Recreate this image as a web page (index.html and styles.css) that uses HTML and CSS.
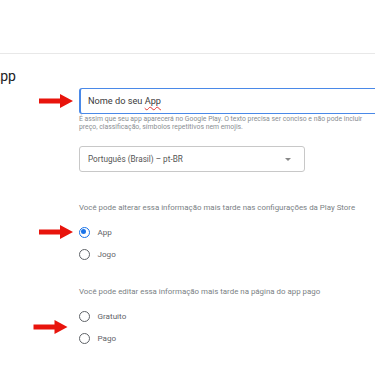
FILE: index.html
```html
<!DOCTYPE html>
<html lang="pt-BR">
<head>
    <meta charset="UTF-8">
    <meta name="viewport" content="width=device-width, initial-scale=1.0">
    <title>Criar app</title>
    <link rel="stylesheet" href="styles.css">
</head>
<body>
    <div class="topbar"></div>

    <div class="form">
        <h2 class="title">App</h2>

        <!-- nome do app -->
        <div class="mark">
            <svg class="arrow" viewBox="0 0 34 16" width="34" height="16"><path d="M0 5.5h21V1l13 7-13 7v-4.5H0z" fill="#e8140c"/></svg>
        </div>
        <div class="field">
            <div class="text-input">Nome do seu <span class="typo">App</span></div>
        </div>
        <div></div>
        <p class="hint">É assim que seu app aparecerá no Google Play. O texto precisa ser conciso e não pode incluir<br>preço, classificação, símbolos repetitivos nem emojis.</p>

        <div></div>
        <div class="select">
            <span>Português (Brasil) – pt-BR</span>
            <span class="caret"></span>
        </div>

        <!-- app ou jogo -->
        <div></div>
        <p class="question first">Você pode alterar essa informação mais tarde nas configurações da Play Store</p>
        <div class="mark">
            <svg class="arrow" viewBox="0 0 34 16" width="34" height="16"><path d="M0 5.5h21V1l13 7-13 7v-4.5H0z" fill="#e8140c"/></svg>
        </div>
        <label class="radio"><span class="dot checked"></span>App</label>
        <div></div>
        <label class="radio"><span class="dot"></span>Jogo</label>

        <!-- gratuito ou pago -->
        <div></div>
        <p class="question">Você pode editar essa informação mais tarde na página do app pago</p>
        <div class="mark span2">
            <svg class="arrow" viewBox="0 0 34 16" width="35" height="16"><path d="M0 5.5h21V1l13 7-13 7v-4.5H0z" fill="#e8140c"/></svg>
        </div>
        <label class="radio"><span class="dot"></span>Gratuito</label>
        <label class="radio"><span class="dot"></span>Pago</label>
    </div>
</body>
</html>
```

FILE: styles.css
```css
body {
    margin: 0;
    font-family: Roboto, "Noto Sans", Arial, sans-serif;
    background-color: #fff;
    color: #3c4043;
    overflow: hidden;
}
.topbar {
    height: 53px;
    border-bottom: 1px solid #e8e8e8;
}
.form {
    display: grid;
    grid-template-columns: 79px 1fr;
    align-items: center;
}
.title {
    grid-column: 1 / 3;
    margin: 14px 0 4px;
    font-size: 14px;
    line-height: 16px;
    font-weight: 400;
    color: #202124;
    text-indent: -9px;
}
.mark {
    display: flex;
    justify-content: flex-end;
    padding-right: 6px;
}
.mark.span2 {
    grid-row: span 2;
    padding-right: 11px;
}
.text-input {
    width: 320px;
    height: 26px;
    box-sizing: border-box;
    border: 1px solid #4a89e8;
    border-left-width: 2px;
    border-radius: 3px;
    padding-left: 7px;
    font-size: 9.2px;
    line-height: 24px;
    color: #3a3a3a;
}
.typo {
    text-decoration: underline wavy #e53935;
    text-decoration-thickness: 1px;
    text-underline-offset: 2px;
}
.hint {
    margin: 1px 0 0;
    font-size: 6.85px;
    line-height: 8px;
    color: #8a8e92;
    white-space: nowrap;
}
.select {
    margin-top: 15px;
    width: 226px;
    height: 26px;
    box-sizing: border-box;
    border: 1px solid #c8c8c8;
    border-radius: 3px;
    padding: 0 13px 0 8px;
    display: flex;
    align-items: center;
    justify-content: space-between;
    font-size: 8.2px;
    color: #555;
}
.caret {
    width: 0;
    height: 0;
    border-left: 3px solid transparent;
    border-right: 3px solid transparent;
    border-top: 3px solid #888;
}
.question {
    margin: 22px 0 8px;
    font-size: 7.9px;
    line-height: 10px;
    color: #7a7f84;
}
.question.first {
    margin-top: 31px;
}
.radio {
    height: 22px;
    display: flex;
    align-items: center;
    font-size: 8.1px;
    color: #5f6368;
}
.dot {
    width: 11px;
    height: 11px;
    box-sizing: border-box;
    border: 1.5px solid #5f6368;
    border-radius: 50%;
    margin-right: 8px;
    margin-left: -0.5px;
    position: relative;
}
.dot.checked {
    border-color: #1a73e8;
}
.dot.checked::after {
    content: "";
    position: absolute;
    left: 1.5px;
    top: 1.5px;
    width: 5px;
    height: 5px;
    border-radius: 50%;
    background-color: #1a73e8;
}
```
